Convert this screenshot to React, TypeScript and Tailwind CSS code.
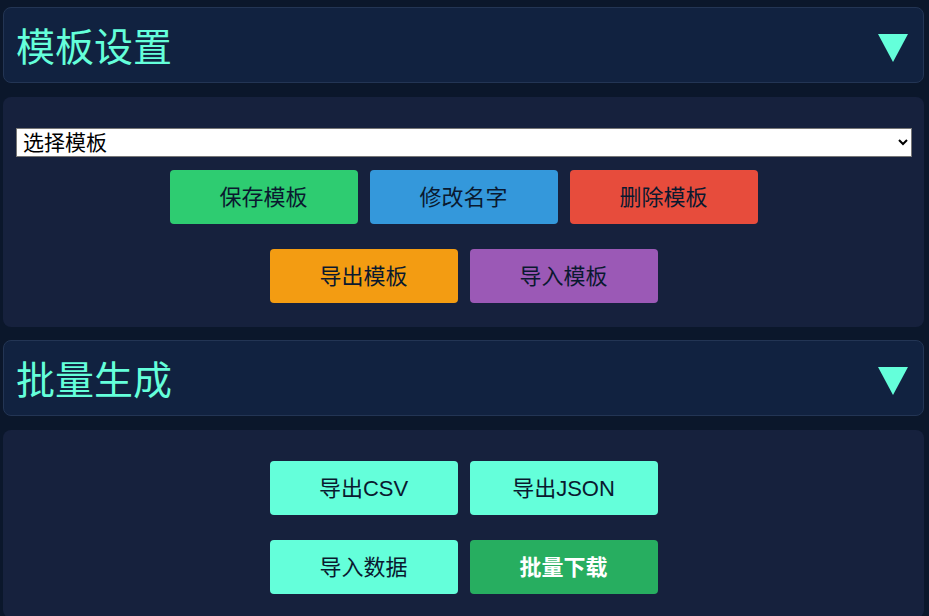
import React from "react";

const Tri = () => (
  <svg width="30" height="28" viewBox="0 0 30 28">
    <polygon points="0,0 30,0 15,28" fill="#64ffda" />
  </svg>
);

const Header = ({ title }: { title: string }) => (
  <div className="flex h-[76px] items-center justify-between rounded-[8px] border border-[#233554] bg-[#112240] pl-[12px] pr-[15px] pt-[5px]">
    <span className="text-[39px] leading-none text-[#64ffda]">{title}</span>
    <Tri />
  </div>
);

const Btn = ({ label, cls }: { label: string; cls: string }) => (
  <button className={`h-[54px] w-[188px] rounded-[4px] pt-[1px] text-[22px] ${cls}`}>{label}</button>
);

export default function App() {
  return (
    <div
      className="min-h-[616px] w-[929px] bg-[#0b172b] pl-[3px] pr-[5px] pt-[7px]"
      style={{ fontFamily: '"Liberation Sans", "Noto Sans CJK SC", sans-serif' }}
    >
      <Header title="模板设置" />
      <div className="mt-[14px] rounded-[8px] bg-[#16213d] px-[13px] pb-[24px] pt-[31px]">
        <select className="h-[29px] w-[896px] border border-[#767676] bg-white pl-[2px] text-[21px] text-black">
          <option>选择模板</option>
        </select>
        <div className="mt-[13px] flex justify-center gap-[12px]">
          <Btn label="保存模板" cls="bg-[#2ecc71] text-[#0a192f]" />
          <Btn label="修改名字" cls="bg-[#3498db] text-[#0a192f]" />
          <Btn label="删除模板" cls="bg-[#e74c3c] text-[#0a192f]" />
        </div>
        <div className="mt-[25px] flex justify-center gap-[12px]">
          <Btn label="导出模板" cls="bg-[#f39c12] text-[#0a192f]" />
          <Btn label="导入模板" cls="bg-[#9b59b6] text-[#0a192f]" />
        </div>
      </div>
      <div className="mt-[13px]">
        <Header title="批量生成" />
      </div>
      <div className="mt-[14px] rounded-[8px] bg-[#16213d] px-[13px] pb-[24px] pt-[31px]">
        <div className="flex justify-center gap-[12px]">
          <Btn label="导出CSV" cls="bg-[#64ffda] text-[#0a192f]" />
          <Btn label="导出JSON" cls="bg-[#64ffda] text-[#0a192f]" />
        </div>
        <div className="mt-[25px] flex justify-center gap-[12px]">
          <Btn label="导入数据" cls="bg-[#64ffda] text-[#0a192f]" />
          <Btn label="批量下载" cls="bg-[#27ae60] font-bold text-white" />
        </div>
      </div>
    </div>
  );
}
